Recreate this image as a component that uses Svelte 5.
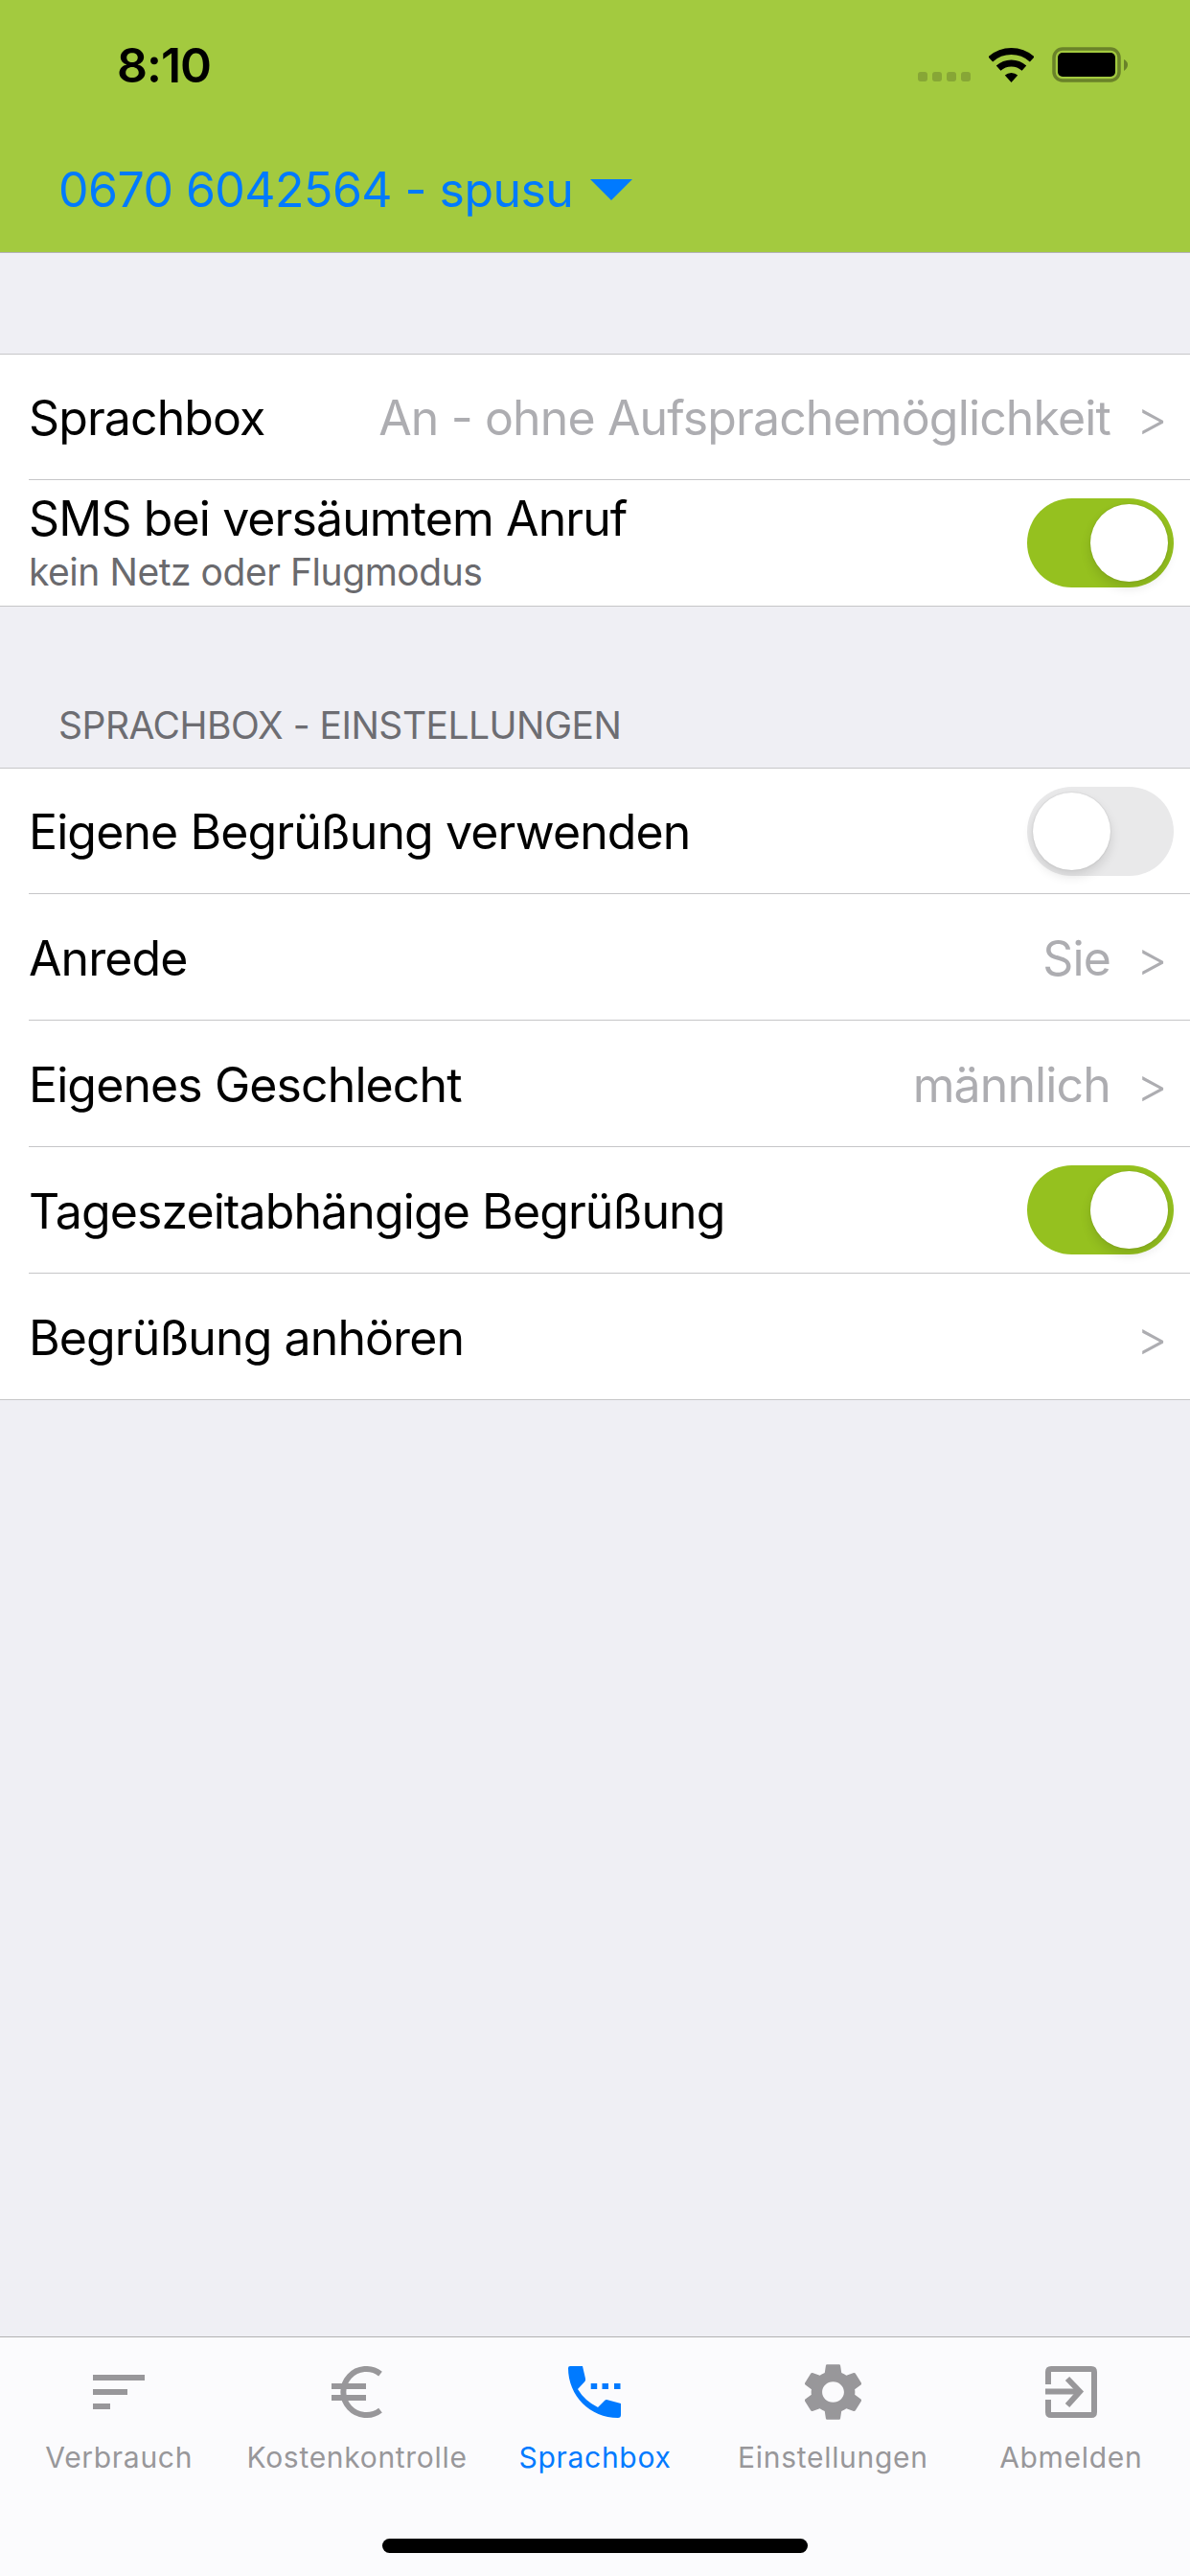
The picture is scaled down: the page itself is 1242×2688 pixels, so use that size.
<script>
  const tabs = [
    { label: 'Verbrauch', icon: 'bars' },
    { label: 'Kostenkontrolle', icon: 'euro' },
    { label: 'Sprachbox', icon: 'phone', active: true },
    { label: 'Einstellungen', icon: 'gear' },
    { label: 'Abmelden', icon: 'exit' }
  ];

  const settings = [
    { label: 'Eigene Begrüßung verwenden', toggle: false },
    { label: 'Anrede', value: 'Sie' },
    { label: 'Eigenes Geschlecht', value: 'männlich' },
    { label: 'Tageszeitabhängige Begrüßung', toggle: true },
    { label: 'Begrüßung anhören', value: '' }
  ];
</script>

{#snippet row(item)}
  <div class="row">
    <span class="label">{item.label}</span>
    {#if item.toggle !== undefined}
      <span class="switch" class:on={item.toggle}><span class="knob"></span></span>
    {:else}
      <span class="value">{item.value}</span>
      <span class="chevron">&gt;</span>
    {/if}
  </div>
{/snippet}

<div class="screen">
  <header>
    <div class="status">
      <span class="time">8:10</span>
      <div class="status-icons">
        <div class="signal"><i></i><i></i><i></i><i></i></div>
        <svg class="wifi" width="47" height="36" viewBox="0 0 47 36">
          <path d="M1.8 11.9A32.5 32.5 0 0 1 45.2 11.9" fill="none" stroke="#000" stroke-width="7" />
          <path d="M10.1 21.1A20 20 0 0 1 36.9 21.1" fill="none" stroke="#000" stroke-width="7" />
          <path d="M23.5 36L16.8 28.6A10 10 0 0 1 30.2 28.6Z" fill="#000" />
        </svg>
        <svg class="battery" width="79" height="37" viewBox="0 0 79 37">
          <rect x="2" y="2" width="68" height="33" rx="9" fill="none" stroke="#6a8229" stroke-width="3.5" />
          <rect x="6" y="6" width="60" height="25" rx="5" fill="#000" />
          <path d="M75 13Q79 15 79 18.5Q79 22 75 25Z" fill="#6a8229" />
        </svg>
      </div>
    </div>
    <div class="account">
      <span>0670 6042564 - spusu</span>
      <svg width="44" height="22" viewBox="0 0 44 22"><path d="M0 0H44L22 22Z" fill="#007aff" /></svg>
    </div>
  </header>

  <main>
    <section class="group first">
      <div class="row">
        <span class="label">Sprachbox</span>
        <span class="value">An - ohne Aufsprachemöglichkeit</span>
        <span class="chevron">&gt;</span>
      </div>
      <div class="row">
        <div class="stack">
          <span class="label">SMS bei versäumtem Anruf</span>
          <span class="sub">kein Netz oder Flugmodus</span>
        </div>
        <span class="switch on"><span class="knob"></span></span>
      </div>
    </section>

    <h2>SPRACHBOX - EINSTELLUNGEN</h2>
    <section class="group">
      {#each settings as item}
        {@render row(item)}
      {/each}
    </section>
  </main>

  <nav>
    {#each tabs as tab}
      <div class="tab" class:active={tab.active}>
        <div class="icon">
          {#if tab.icon === 'bars'}
            <svg width="54" height="36" viewBox="0 0 54 36" fill="currentColor">
              <rect width="54" height="6" />
              <rect y="15" width="36" height="6" />
              <rect y="30" width="18" height="6" />
            </svg>
          {:else if tab.icon === 'euro'}
            <svg width="54" height="54" viewBox="0 0 54 54" fill="currentColor">
              <path d="M51 8A24 24 0 1 0 51 46" fill="none" stroke="currentColor" stroke-width="6" />
              <rect y="18" width="36" height="6" />
              <rect y="30" width="36" height="6" />
            </svg>
          {:else if tab.icon === 'phone'}
            <svg width="55" height="54" viewBox="0 0 55 54" fill="currentColor">
              <path d="M2 0H15L18 13Q18.5 15 17 16.5L10 24Q17 36 31 43L38 36Q39.5 34.5 42 35.5L55 39V51Q55 54 52 54C23 54 0 31 0 2Q0 0 2 0Z" />
              <rect x="23.7" y="18" width="6.5" height="6" />
              <rect x="35.5" y="18" width="6.5" height="6" />
              <rect x="48" y="18" width="6.5" height="6" />
            </svg>
          {:else if tab.icon === 'gear'}
            <svg width="59" height="60" viewBox="2.7 2 18.6 20" preserveAspectRatio="none" fill="currentColor">
              <path fill-rule="evenodd" d="M19.14 12.94c.04-.3.06-.61.06-.94 0-.32-.02-.64-.07-.94l2.03-1.58c.18-.14.23-.41.12-.61l-1.92-3.32c-.12-.22-.37-.29-.59-.22l-2.39.96c-.5-.38-1.03-.7-1.62-.94l-.36-2.54c-.04-.24-.24-.41-.48-.41h-3.84c-.24 0-.43.17-.47.41l-.36 2.54c-.59.24-1.13.57-1.62.94l-2.39-.96c-.22-.08-.47 0-.59.22L2.74 8.87c-.12.21-.08.47.12.61l2.03 1.58c-.05.3-.09.63-.09.94s.02.64.07.94l-2.03 1.58c-.18.14-.23.41-.12.61l1.92 3.32c.12.22.37.29.59.22l2.39-.96c.5.38 1.03.7 1.62.94l.36 2.54c.05.24.24.41.48.41h3.84c.24 0 .44-.17.47-.41l.36-2.54c.59-.24 1.13-.56 1.62-.94l2.39.96c.22.08.47 0 .59-.22l1.92-3.32c.12-.22.07-.47-.12-.61l-2.01-1.58zM12 15.6c-1.98 0-3.6-1.62-3.6-3.6s1.62-3.6 3.6-3.6 3.6 1.62 3.6 3.6-1.62 3.6-3.6 3.6z" />
            </svg>
          {:else}
            <svg width="54" height="54" viewBox="0 0 54 54" fill="none" stroke="currentColor" stroke-width="6">
              <path d="M3 19V6Q3 3 6 3H48Q51 3 51 6V48Q51 51 48 51H6Q3 51 3 48V35" />
              <path d="M0 26.5H36" />
              <path d="M23 13L36 26.5L23 41" />
            </svg>
          {/if}
        </div>
        <span>{tab.label}</span>
      </div>
    {/each}
    <div class="home"></div>
  </nav>
</div>

<style>
  :global(body) {
    margin: 0;
    background: #efeff4;
  }

  .screen {
    width: 1242px;
    height: 2688px;
    display: flex;
    flex-direction: column;
    font-family: Inter, "Liberation Sans", sans-serif;
    color: #000;
    overflow: hidden;
  }

  header {
    height: 264px;
    box-sizing: border-box;
    background: #a3ca3f;
    border-bottom: 1px solid #b2b2b2;
    flex: none;
  }

  .status {
    display: flex;
    justify-content: space-between;
    align-items: flex-start;
    height: 100px;
    box-sizing: border-box;
    padding: 38px 65px 0 122px;
  }

  .time {
    font-size: 50px;
    font-weight: 600;
    line-height: 60px;
    letter-spacing: -1px;
  }

  .status-icons {
    display: flex;
    align-items: flex-end;
    margin-top: 11px;
  }

  .signal {
    display: flex;
    gap: 5px;
    margin-right: 19px;
    margin-bottom: 1px;
  }

  .signal i {
    width: 10px;
    height: 10px;
    border-radius: 3px;
    background: #87a636;
  }

  .battery {
    margin-left: 19px;
  }

  .account {
    display: flex;
    align-items: center;
    gap: 18px;
    margin-top: 62px;
    padding-left: 61px;
    color: #007aff;
    font-size: 50px;
    line-height: 72px;
    letter-spacing: -0.55px;
  }

  main {
    flex: 1;
  }

  .group {
    background: #fff;
    border-top: 1px solid #c6c6c8;
    border-bottom: 1px solid #c6c6c8;
  }

  .first {
    margin-top: 105px;
  }

  h2 {
    margin: 0;
    height: 168px;
    box-sizing: border-box;
    padding: 99px 0 0 61px;
    font-size: 39px;
    line-height: 50px;
    font-weight: 400;
    color: #6d6d72;
    letter-spacing: -0.5px;
  }

  .row {
    height: 131px;
    margin-left: 30px;
    padding-right: 17px;
    display: flex;
    align-items: center;
    border-bottom: 1px solid #c6c6c8;
  }

  .row:first-child {
    height: 130px;
  }

  .row:last-child {
    border-bottom: none;
  }

  .label {
    font-size: 50px;
    line-height: 60px;
    letter-spacing: -0.9px;
    flex: 1;
    padding-top: 2px;
  }

  .stack {
    flex: 1;
    display: flex;
    flex-direction: column;
    gap: 4px;
    margin-top: -4px;
  }

  .stack .label {
    flex: none;
    padding-top: 0;
  }

  .sub {
    font-size: 39px;
    line-height: 44px;
    color: #6a6a6e;
    letter-spacing: -0.45px;
  }

  .value {
    font-size: 50px;
    line-height: 60px;
    color: #adadb1;
    letter-spacing: -0.87px;
    padding-top: 2px;
  }

  .chevron {
    width: 27px;
    margin-left: 27px;
    margin-right: 12px;
    padding-top: 2px;
    font-size: 50px;
    line-height: 60px;
    color: #adadb1;
    font-weight: 300;
    text-align: right;
  }

  .switch {
    position: relative;
    width: 153px;
    height: 93px;
    border-radius: 47px;
    background: #e9e9ea;
  }

  .switch.on {
    background: #95c11f;
  }

  .knob {
    position: absolute;
    top: 6px;
    left: 6px;
    width: 81px;
    height: 81px;
    border-radius: 50%;
    background: #fff;
    box-shadow: 0 6px 12px rgba(0, 0, 0, 0.12), 0 0 2px rgba(0, 0, 0, 0.15);
  }

  .on .knob {
    left: 66px;
  }

  nav {
    position: relative;
    flex: none;
    height: 250px;
    box-sizing: border-box;
    border-top: 1px solid #b2b2b2;
    background: #fbfbfd;
    display: grid;
    grid-template-columns: repeat(5, 1fr);
    align-items: start;
    padding-top: 26px;
  }

  .tab {
    display: flex;
    flex-direction: column;
    align-items: center;
    color: #98979a;
    font-size: 30px;
    line-height: 36px;
    letter-spacing: 0.7px;
    white-space: nowrap;
  }

  .tab.active {
    color: #007aff;
  }

  .icon {
    height: 62px;
    display: flex;
    align-items: center;
    justify-content: center;
    margin-bottom: 19px;
  }

  .home {
    position: absolute;
    left: 399px;
    bottom: 24px;
    width: 444px;
    height: 15px;
    border-radius: 8px;
    background: #000;
  }
</style>
